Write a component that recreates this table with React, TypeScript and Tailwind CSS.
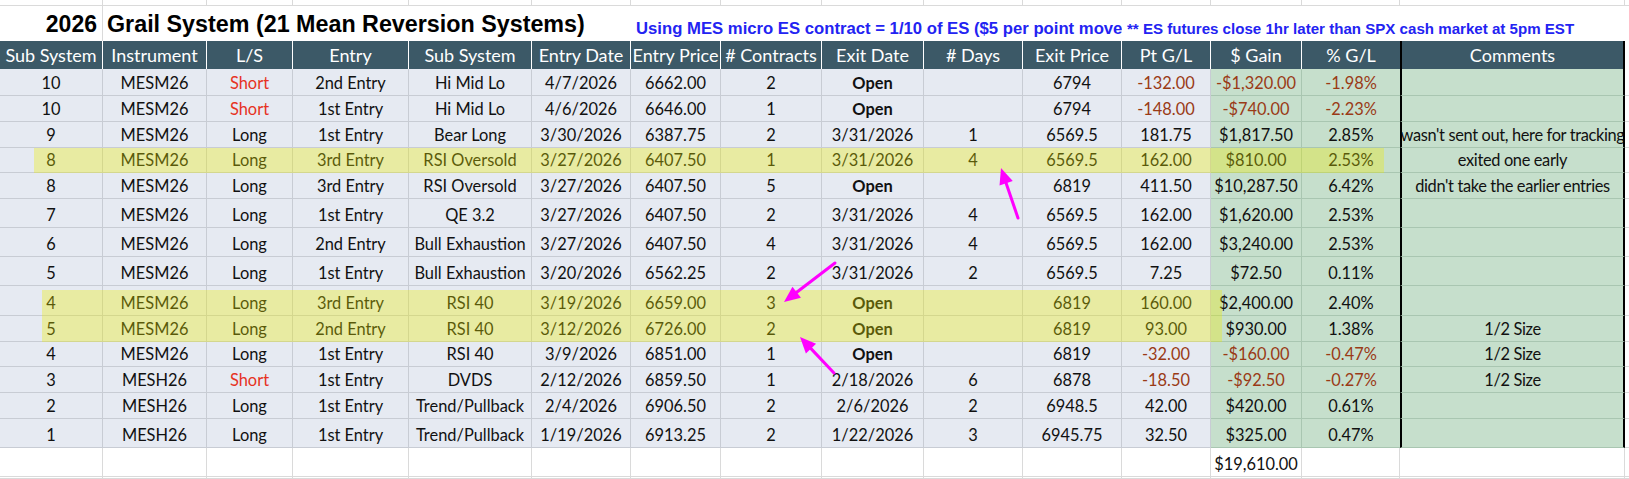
import React from 'react';

const GRID =
  'grid grid-cols-[103px_104px_86px_116px_123px_99px_90px_101px_102px_99px_99px_89px_91px_98px_225px_4px]';

const HEADERS = [
  'Sub System',
  'Instrument',
  'L/S',
  'Entry',
  'Sub System',
  'Entry Date',
  'Entry Price',
  '# Contracts',
  'Exit Date',
  '# Days',
  'Exit Price',
  'Pt G/L',
  '$ Gain',
  '% G/L',
  'Comments',
];

type Row = { h: string; cells: string[] };

const ROWS: Row[] = [
  { h: 'h-[27px]', cells: ['10', 'MESM26', 'Short', '2nd Entry', 'Hi Mid Lo', '4/7/2026', '6662.00', '2', 'Open', '', '6794', '-132.00', '-$1,320.00', '-1.98%', ''] },
  { h: 'h-[26px]', cells: ['10', 'MESM26', 'Short', '1st Entry', 'Hi Mid Lo', '4/6/2026', '6646.00', '1', 'Open', '', '6794', '-148.00', '-$740.00', '-2.23%', ''] },
  { h: 'h-[26px]', cells: ['9', 'MESM26', 'Long', '1st Entry', 'Bear Long', '3/30/2026', '6387.75', '2', '3/31/2026', '1', '6569.5', '181.75', '$1,817.50', '2.85%', "wasn't sent out, here for tracking"] },
  { h: 'h-[25px]', cells: ['8', 'MESM26', 'Long', '3rd Entry', 'RSI Oversold', '3/27/2026', '6407.50', '1', '3/31/2026', '4', '6569.5', '162.00', '$810.00', '2.53%', 'exited one early'] },
  { h: 'h-[26px]', cells: ['8', 'MESM26', 'Long', '3rd Entry', 'RSI Oversold', '3/27/2026', '6407.50', '5', 'Open', '', '6819', '411.50', '$10,287.50', '6.42%', "didn't take the earlier entries"] },
  { h: 'h-[29px]', cells: ['7', 'MESM26', 'Long', '1st Entry', 'QE 3.2', '3/27/2026', '6407.50', '2', '3/31/2026', '4', '6569.5', '162.00', '$1,620.00', '2.53%', ''] },
  { h: 'h-[29px]', cells: ['6', 'MESM26', 'Long', '2nd Entry', 'Bull Exhaustion', '3/27/2026', '6407.50', '4', '3/31/2026', '4', '6569.5', '162.00', '$3,240.00', '2.53%', ''] },
  { h: 'h-[29px]', cells: ['5', 'MESM26', 'Long', '1st Entry', 'Bull Exhaustion', '3/20/2026', '6562.25', '2', '3/31/2026', '2', '6569.5', '7.25', '$72.50', '0.11%', ''] },
  { h: 'h-[30px]', cells: ['4', 'MESM26', 'Long', '3rd Entry', 'RSI 40', '3/19/2026', '6659.00', '3', 'Open', '', '6819', '160.00', '$2,400.00', '2.40%', ''] },
  { h: 'h-[26px]', cells: ['5', 'MESM26', 'Long', '2nd Entry', 'RSI 40', '3/12/2026', '6726.00', '2', 'Open', '', '6819', '93.00', '$930.00', '1.38%', '1/2 Size'] },
  { h: 'h-[25px]', cells: ['4', 'MESM26', 'Long', '1st Entry', 'RSI 40', '3/9/2026', '6851.00', '1', 'Open', '', '6819', '-32.00', '-$160.00', '-0.47%', '1/2 Size'] },
  { h: 'h-[26px]', cells: ['3', 'MESH26', 'Short', '1st Entry', 'DVDS', '2/12/2026', '6859.50', '1', '2/18/2026', '6', '6878', '-18.50', '-$92.50', '-0.27%', '1/2 Size'] },
  { h: 'h-[26px]', cells: ['2', 'MESH26', 'Long', '1st Entry', 'Trend/Pullback', '2/4/2026', '6906.50', '2', '2/6/2026', '2', '6948.5', '42.00', '$420.00', '0.61%', ''] },
  { h: 'h-[29px]', cells: ['1', 'MESH26', 'Long', '1st Entry', 'Trend/Pullback', '1/19/2026', '6913.25', '2', '1/22/2026', '3', '6945.75', '32.50', '$325.00', '0.47%', ''] },
];

const cellBg = (i: number) => {
  if (i === 14)
    return 'bg-[#c6dfcc] border-l-2 border-r-2 border-l-black border-r-black border-b border-b-[#a9c6b1] tracking-[-0.35px]';
  if (i === 13) return 'bg-[#c6dfcc] border-b border-[#a9c6b1]';
  if (i === 12) return 'bg-[#c6dfcc] border-r border-b border-[#a9c6b1]';
  return 'bg-[#e6eaf2] border-r border-b border-[#c8ccd4]';
};

const textColor = (i: number, v: string) => {
  if (i === 2 && v === 'Short') return 'text-[#e63222]';
  if (i >= 11 && i <= 13 && v.startsWith('-')) return 'text-[#9a3a16]';
  return 'text-[#111]';
};

const BlankRow = ({ h }: { h: string }) => (
  <div className={GRID}>
    {Array.from({ length: 16 }).map((_, i) => (
      <div
        key={i}
        className={`${h} ${i < 15 ? 'border-r' : ''} border-b border-[#dadada] bg-white`}
      />
    ))}
  </div>
);

const Arrow = ({ tail, tip }: { tail: [number, number]; tip: [number, number] }) => {
  const dx = tip[0] - tail[0];
  const dy = tip[1] - tail[1];
  const len = Math.hypot(dx, dy);
  const ux = dx / len;
  const uy = dy / len;
  const bx = tip[0] - 16 * ux;
  const by = tip[1] - 16 * uy;
  const nx = -uy * 7;
  const ny = ux * 7;
  return (
    <g>
      <line x1={tail[0]} y1={tail[1]} x2={bx} y2={by} stroke="#ff00ff" strokeWidth={3} strokeLinecap="round" />
      <polygon
        points={`${tip[0]},${tip[1]} ${bx + nx},${by + ny} ${bx - nx},${by - ny}`}
        fill="#ff00ff"
      />
    </g>
  );
};

export default function App() {
  return (
    <div className="relative w-[1629px] h-[479px] overflow-hidden bg-white font-['Lato',sans-serif]">
      {/* stub row above the title */}
      <BlankRow h="h-[6px]" />

      {/* title row */}
      <div className={`${GRID} h-[35px] font-['Liberation_Sans',Arial,sans-serif] font-bold`}>
        <div className="flex items-end justify-end pr-[5px] pb-[4px] text-[23px] leading-[26px] text-black border-r border-[#dadada]">
          2026
        </div>
        <div className="col-span-5 flex items-end pl-[4px] pb-[4px] text-[23.3px] leading-[26px] text-black whitespace-nowrap">
          Grail System (21 Mean Reversion Systems)
        </div>
        <div className="col-span-5 flex items-end overflow-hidden pl-[5px] pb-[2px] text-[16.7px] leading-[20px] text-[#2323f2] whitespace-nowrap">
          Using MES micro ES contract = 1/10 of ES ($5 per point move)
        </div>
        <div className="col-span-4 flex items-end pl-[5px] pb-[2px] text-[15.1px] leading-[20px] text-[#2323f2] whitespace-nowrap">
          ** ES futures close 1hr later than SPX cash market at 5pm EST
        </div>
        <div />
      </div>

      {/* header row */}
      <div className={`${GRID} h-[28px]`}>
        {HEADERS.map((label, i) => (
          <div
            key={label + i}
            className={`flex items-center justify-center whitespace-nowrap bg-[#3c5967] text-white text-[18px] leading-[28px] ${
              i === 14
                ? 'border-l-2 border-r-2 border-black'
                : i === 13
                  ? ''
                  : 'border-r border-white'
            }`}
          >
            {label}
          </div>
        ))}
        <div className="bg-white" />
      </div>

      {/* trades */}
      {ROWS.map((row, r) => (
        <div key={r} className={GRID}>
          {row.cells.map((v, i) => (
            <div
              key={i}
              className={`${row.h} ${cellBg(i)} ${textColor(i, v)} ${
                v === 'Open' ? 'font-bold' : ''
              } flex items-end justify-center overflow-hidden whitespace-nowrap pb-[2px] text-[16.4px] leading-[20px]`}
            >
              {v}
            </div>
          ))}
          <div className={`${row.h} bg-white border-b border-[#dadada]`} />
        </div>
      ))}

      {/* total row */}
      <div className={GRID}>
        {Array.from({ length: 16 }).map((_, i) => (
          <div
            key={i}
            className={`h-[29px] flex items-end justify-center pb-[2px] text-[16.4px] leading-[20px] text-[#111] bg-white border-b border-[#dadada] ${
              i < 15 ? 'border-r' : ''
            }`}
          >
            {i === 12 ? '$19,610.00' : ''}
          </div>
        ))}
      </div>
      <BlankRow h="h-[2px]" />

      {/* yellow highlighter marks */}
      <div className="absolute left-[34px] top-[148px] w-[1350px] h-[25px] bg-[rgba(236,238,0,0.33)] pointer-events-none" />
      <div className="absolute left-[42px] top-[290px] w-[1180px] h-[52px] bg-[rgba(236,238,0,0.33)] pointer-events-none" />

      {/* pink arrows */}
      <svg className="absolute left-0 top-0 pointer-events-none" width={1629} height={479}>
        <Arrow tail={[1018, 218]} tip={[1001, 168]} />
        <Arrow tail={[835, 263]} tip={[784, 302]} />
        <Arrow tail={[834, 373]} tip={[800, 337]} />
      </svg>
    </div>
  );
}
